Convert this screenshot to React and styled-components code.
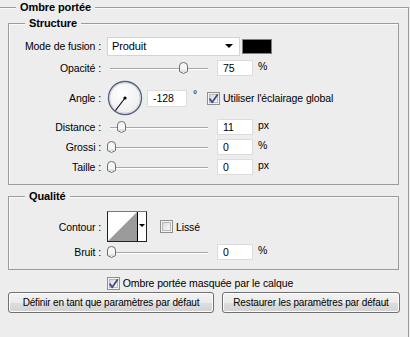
import React from "react";
import styled, { createGlobalStyle } from "styled-components";

const GlobalStyle = createGlobalStyle`
  html, body {
    margin: 0;
    padding: 0;
    background: #ededed;
  }
  body {
    font-family: "Liberation Sans", Arial, sans-serif;
    font-size: 10.5px;
    letter-spacing: -0.1px;
    color: #000;
    overflow: hidden;
  }
`;

const sliders = [
  { label: "Distance :", value: "11", unit: "px", pos: 14 },
  { label: "Grossi :", value: "0", unit: "%", pos: 4 },
  { label: "Taille :", value: "0", unit: "px", pos: 4 },
];

const Check = ({ checked }) => (
  <CheckBox width="13" height="13" viewBox="0 0 13 13">
    <defs>
      <linearGradient id={checked ? "cbon" : "cboff"} x1="0" y1="0" x2="1" y2="1">
        <stop offset="0" stopColor="#d8d8d8" />
        <stop offset="1" stopColor="#fbfbfb" />
      </linearGradient>
    </defs>
    <rect x="0.5" y="0.5" width="12" height="12" fill="#f4f4f4" stroke="#8e8f8f" />
    <rect x="2.5" y="2.5" width="8" height="8" fill={`url(#${checked ? "cbon" : "cboff"})`} stroke="#b9b9b9" />
    {checked && (
      <path
        d="M2.6 6.6 L5.2 10.2 L10.8 2.2"
        fill="none"
        stroke="#3b4f8e"
        strokeWidth="1.8"
        strokeLinejoin="round"
      />
    )}
  </CheckBox>
);

const Slider = ({ pos }) => (
  <SliderTrack>
    <Thumb style={{ left: pos - 4 }} width="9" height="12" viewBox="0 0 9 12">
      <path
        d="M0.5 4 Q0.5 0.5 4.5 0.5 Q8.5 0.5 8.5 4 L8.5 9.5 L4.5 11.5 L0.5 9.5 Z"
        fill="#f7f7f7"
        stroke="#6f6f6f"
      />
      <line x1="2" y1="9" x2="7" y2="9" stroke="#c9c9c9" />
    </Thumb>
  </SliderTrack>
);

const Dial = () => (
  <svg width="36" height="36" viewBox="0 0 36 36">
    <defs>
      <radialGradient id="dialFill" cx="0.4" cy="0.35" r="0.7">
        <stop offset="0" stopColor="#ffffff" />
        <stop offset="1" stopColor="#ececec" />
      </radialGradient>
    </defs>
    <circle cx="18" cy="18" r="16.5" fill="url(#dialFill)" stroke="#55607c" strokeWidth="1.4" />
    <circle cx="18" cy="18" r="15.2" fill="none" stroke="#c8ccd8" strokeWidth="0.8" />
    <line x1="18" y1="18" x2="8.5" y2="30.5" stroke="#000" strokeWidth="1.1" />
    <circle cx="18" cy="18" r="1.6" fill="#000" />
  </svg>
);

const App = () => {
  return (
    <>
      <GlobalStyle />
      <Outer>
        <GroupHead $indent={17}>
          <GroupTitle>Ombre portée</GroupTitle>
        </GroupHead>
        <Inner $top={9}>
          <GroupHead $indent={16} $below={6}>
            <GroupTitle>Structure</GroupTitle>
          </GroupHead>
          <Row $h={20}>
            <Label>Mode de fusion :</Label>
            <Controls>
              <Select>
                <span>Produit</span>
                <Arrow />
              </Select>
              <Swatch />
            </Controls>
          </Row>
          <Row $h={23}>
            <Label>Opacité :</Label>
            <Controls>
              <Slider pos={76} />
              <NumBox>75</NumBox>
              <Unit>%</Unit>
            </Controls>
          </Row>
          <Row $h={38}>
            <Label>Angle :</Label>
            <Controls $gap={4}>
              <Dial />
              <NumBox $w={40} $h={17}>-128</NumBox>
              <Degree>°</Degree>
              <CheckLabel>
                <Check checked />
                Utiliser l'éclairage global
              </CheckLabel>
            </Controls>
          </Row>
          {sliders.map((s) => (
            <Row $h={20} key={s.label}>
              <Label>{s.label}</Label>
              <Controls>
                <Slider pos={s.pos} />
                <NumBox>{s.value}</NumBox>
                <Unit>{s.unit}</Unit>
              </Controls>
            </Row>
          ))}
        </Inner>

        <Inner $top={11}>
          <GroupHead $indent={16} $below={8}>
            <GroupTitle>Qualité</GroupTitle>
          </GroupHead>
          <Row $h={31}>
            <Label>Contour :</Label>
            <Controls $gap={13}>
              <Contour>
                <svg width="29" height="29" viewBox="0 0 29 29">
                  <rect width="29" height="29" fill="#fff" />
                  <polygon points="0,29 29,0 29,29" fill="#9b9b9b" />
                </svg>
                <ContourDrop>
                  <Arrow $small />
                </ContourDrop>
              </Contour>
              <CheckLabel>
                <Check />
                Lissé
              </CheckLabel>
            </Controls>
          </Row>
          <Row $h={20}>
            <Label>Bruit :</Label>
            <Controls>
              <Slider pos={4} />
              <NumBox>0</NumBox>
              <Unit>%</Unit>
            </Controls>
          </Row>
        </Inner>

        <Footer>
          <CheckLabel>
            <Check checked />
            Ombre portée masquée par le calque
          </CheckLabel>
        </Footer>
        <Buttons>
          <Button>Définir en tant que paramètres par défaut</Button>
          <Button>Restaurer les paramètres par défaut</Button>
        </Buttons>
      </Outer>
    </>
  );
};

const Outer = styled.section`
  margin: 7px 0 0 -2px;
  padding: 0 0 20px;
  width: 411px;
  box-sizing: border-box;
  border: 1px solid #9b9b9b;
  box-shadow: inset 1px 1px 0 #fbfbfb;
  min-height: 360px;
`;

const GroupHead = styled.div`
  display: flex;
  margin-top: -8px;
  margin-bottom: ${(p) => p.$below || 0}px;
  padding-left: ${(p) => p.$indent}px;
`;

const GroupTitle = styled.span`
  padding: 0 4px;
  line-height: 14px;
  font-size: 11px;
  font-weight: 700;
  background: #ededed;
`;

const Inner = styled.section`
  margin: ${(p) => p.$top}px 9px 0 9px;
  padding: 0 0 7px;
  border: 1px solid #9b9b9b;
  box-shadow: inset 1px 1px 0 #fbfbfb;
`;

const Row = styled.div`
  display: grid;
  grid-template-columns: 92px 1fr;
  column-gap: 6px;
  align-items: center;
  height: ${(p) => p.$h}px;
`;

const Label = styled.div`
  text-align: right;
  white-space: nowrap;
`;

const Controls = styled.div`
  display: flex;
  align-items: center;
  gap: ${(p) => (p.$gap !== undefined ? p.$gap : 9)}px;
`;

const Select = styled.div`
  width: 133px;
  height: 19px;
  box-sizing: border-box;
  background: #fff;
  border: 1px solid #d3d3d3;
  display: flex;
  align-items: center;
  justify-content: space-between;
  padding: 0 6px 0 4px;
  font-size: 11px;
`;

const Arrow = styled.span`
  width: 0;
  height: 0;
  border-left: ${(p) => (p.$small ? 3 : 4)}px solid transparent;
  border-right: ${(p) => (p.$small ? 3 : 4)}px solid transparent;
  border-top: ${(p) => (p.$small ? 3 : 4)}px solid #000;
`;

const Swatch = styled.div`
  width: 30px;
  height: 15px;
  box-sizing: border-box;
  background: #000;
  border: 1px solid #808080;
  margin-left: -7px;
`;

const SliderTrack = styled.div`
  position: relative;
  width: 101px;
  height: 12px;
  flex: none;

  &::before {
    content: "";
    position: absolute;
    left: 3px;
    right: 0;
    top: 6px;
    height: 1px;
    background: #a8a8a8;
    box-shadow: 0 1px 0 #fff;
  }
`;

const Thumb = styled.svg`
  position: absolute;
  top: 0;
`;

const NumBox = styled.div`
  width: ${(p) => p.$w || 36}px;
  height: ${(p) => p.$h || 16}px;
  box-sizing: border-box;
  background: #fff;
  border: 1px solid #dcdcdc;
  padding-left: 5px;
  display: flex;
  align-items: center;
  flex: none;
`;

const Unit = styled.span`
  margin-left: -4px;
  margin-top: -4px;
`;

const Degree = styled.span`
  margin: -8px 6px 0 2px;
`;

const CheckLabel = styled.label`
  display: flex;
  align-items: center;
  gap: 3px;
  white-space: nowrap;
`;

const CheckBox = styled.svg`
  flex: none;
`;

const Contour = styled.div`
  display: flex;
  height: 31px;
  box-sizing: border-box;
  border: 1px solid #222;
  border-top-color: #777;
  background: #fff;
`;

const ContourDrop = styled.div`
  width: 9px;
  border-left: 1px solid #000;
  display: flex;
  justify-content: center;
  padding-top: 12px;
  box-sizing: border-box;
`;

const Footer = styled.div`
  display: flex;
  justify-content: center;
  padding-right: 7px;
  margin-top: 5px;
  height: 16px;
`;

const Buttons = styled.div`
  display: grid;
  grid-template-columns: 206px 178px;
  gap: 8px;
  margin: 1px 0 0 9px;
`;

const Button = styled.button`
  height: 21px;
  padding: 0;
  font-family: inherit;
  font-size: 10px;
  letter-spacing: -0.15px;
  color: #000;
  border: 1px solid #707070;
  border-radius: 3px;
  background: linear-gradient(#f3f3f3 0%, #ebebeb 50%, #dddddd 51%, #d3d3d3 100%);
  box-shadow: inset 0 0 0 1px #fcfcfc;
  white-space: nowrap;
  overflow: hidden;
`;

export default App;
